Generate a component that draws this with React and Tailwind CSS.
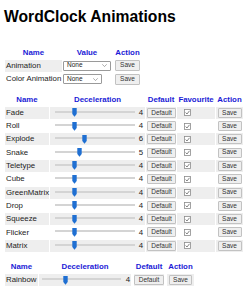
import React from 'react';

const font = { fontFamily: '"Liberation Sans", Arial, sans-serif' };

const effects = [
  ['Fade', 4], ['Roll', 4], ['Explode', 6], ['Snake', 5], ['Teletype', 4], ['Cube', 4],
  ['GreenMatrix', 4], ['Drop', 4], ['Squeeze', 4], ['Flicker', 4], ['Matrix', 4],
];

const Btn = ({ children, className = '' }) => (
  <button className={`h-[10px] bg-[#efefef] border border-[#c2c2c2] rounded-[1px] text-[6.5px] leading-none text-[#333] flex items-center justify-center ${className}`}>
    {children}
  </button>
);

const Select = ({ width }) => (
  <div className={`h-[10px] ${width} bg-white border border-[#9a9a9a] rounded-[1px] flex items-center justify-between pl-[3px] pr-[3px]`}>
    <span className="text-[6.5px] leading-none text-[#222]">None</span>
    <svg width="5" height="3" viewBox="0 0 5 3"><path d="M0.3 0.3 L2.5 2.6 L4.7 0.3" fill="none" stroke="#888" strokeWidth="0.7" /></svg>
  </div>
);

const Slider = ({ thumbLeft }) => (
  <div className="relative flex-1 h-[9px] flex items-center">
    <div className="w-full h-[2px] bg-[#d4d4d4] -mt-[2px]" />
    <svg className="absolute top-0" style={{ left: thumbLeft }} width="5" height="9" viewBox="0 0 5 9">
      <path d="M0.3 0 H4.7 V6 L2.5 8.8 L0.3 6 Z" fill="#1f6fd2" />
    </svg>
  </div>
);

const Check = () => (
  <svg width="7" height="7" viewBox="0 0 7 7">
    <rect x="0.5" y="0.5" width="6" height="6" fill="white" stroke="#8c8c8c" strokeWidth="0.8" />
    <path d="M1.6 3.5 L3 5 L5.5 1.8" fill="none" stroke="#666" strokeWidth="0.8" />
  </svg>
);

const Head = ({ w, children }) => (
  <div className={`${w} text-center font-bold text-[#1a1ad6]`}>{children}</div>
);

export default function App() {
  return (
    <div className="w-[250px] h-[293px] bg-white pl-[4px] text-[7.84px] leading-none text-[#222]" style={font}>
      <h1 className="pt-[8px] text-[15.7px] leading-[18px] font-bold text-black">WordClock Animations</h1>

      {/* general settings */}
      <div className="mt-[21px] ml-[1px] flex flex-col">
        <div className="h-[11px] flex items-center gap-[1px]">
          <Head w="w-[57px]">Name</Head>
          <Head w="w-[48px]">Value</Head>
          <div className="w-[2px]" />
          <Head w="w-[25px]">Action</Head>
        </div>
        <div className="mt-[1.5px] h-[12px] flex items-center gap-[1px]">
          <div className="w-[57px] h-full bg-[#eeeeee] flex items-center pl-[1px]">Animation</div>
          <div className="w-[48px] flex items-center"><Select width="w-[48px]" /></div>
          <div className="w-[2px]" />
          <div className="w-[25px] flex items-center"><Btn className="w-[25px] h-[11px]">Save</Btn></div>
        </div>
        <div className="mt-[1.5px] h-[12px] flex items-center gap-[1px]">
          <div className="w-[57px] h-full flex items-center pl-[1px]">Color Animation</div>
          <div className="w-[48px] flex items-center"><Select width="w-[39px]" /></div>
          <div className="w-[2px]" />
          <div className="w-[25px] flex items-center"><Btn className="w-[25px] h-[11px]">Save</Btn></div>
        </div>
      </div>

      {/* per animation settings */}
      <div className="mt-[9.5px] ml-[1px] flex flex-col gap-[1.3px]">
        <div className="h-[11px] flex items-center gap-[1px]">
          <Head w="w-[44px]">Name</Head>
          <Head w="w-[95px]">Deceleration</Head>
          <Head w="w-[30px]">Default</Head>
          <Head w="w-[38px]">Favourite</Head>
          <Head w="w-[27px]">Action</Head>
        </div>
        {effects.map(([name, v], i) => {
          const bg = i % 2 === 0 ? 'bg-[#eeeeee]' : 'bg-white';
          return (
            <div key={name} className="h-[12px] flex items-stretch gap-[1px]">
              <div className={`w-[44px] ${bg} flex items-center pl-[1px]`}>{name}</div>
              <div className={`w-[95px] ${bg} flex items-center pl-[5px] pr-[2px] gap-[4px]`}>
                <Slider thumbLeft={5 * v - 3} />
                <span>{v}</span>
              </div>
              <div className={`w-[30px] ${bg} flex items-center justify-end`}><Btn className="w-[29px]">Default</Btn></div>
              <div className={`w-[38px] ${bg} flex items-center pl-[7px]`}><Check /></div>
              <div className={`w-[27px] ${bg} flex items-center justify-center`}><Btn className="w-[24px]">Save</Btn></div>
            </div>
          );
        })}
      </div>

      {/* colour settings */}
      <div className="mt-[10px] ml-[1px] flex flex-col gap-[1.5px]">
        <div className="h-[11px] flex items-center gap-[1px]">
          <Head w="w-[33px]">Name</Head>
          <Head w="w-[92px]">Deceleration</Head>
          <div className="w-[1px]" />
          <Head w="w-[30px]">Default</Head>
          <div className="w-[1px]" />
          <Head w="w-[27px]">Action</Head>
        </div>
        <div className="h-[12px] flex items-stretch gap-[1px]">
          <div className="w-[33px] bg-[#eeeeee] flex items-center pl-[1px]">Rainbow</div>
          <div className="w-[92px] bg-[#eeeeee] flex items-center pl-[3px] pr-[1px] gap-[5px]">
            <Slider thumbLeft={20.5} />
            <span>4</span>
          </div>
          <div className="w-[1px]" />
          <div className="w-[30px] bg-[#eeeeee] flex items-center justify-center"><Btn className="w-[30px]">Default</Btn></div>
          <div className="w-[1px]" />
          <div className="w-[27px] bg-[#eeeeee] flex items-center justify-center"><Btn className="w-[23px]">Save</Btn></div>
        </div>
      </div>
    </div>
  );
}
